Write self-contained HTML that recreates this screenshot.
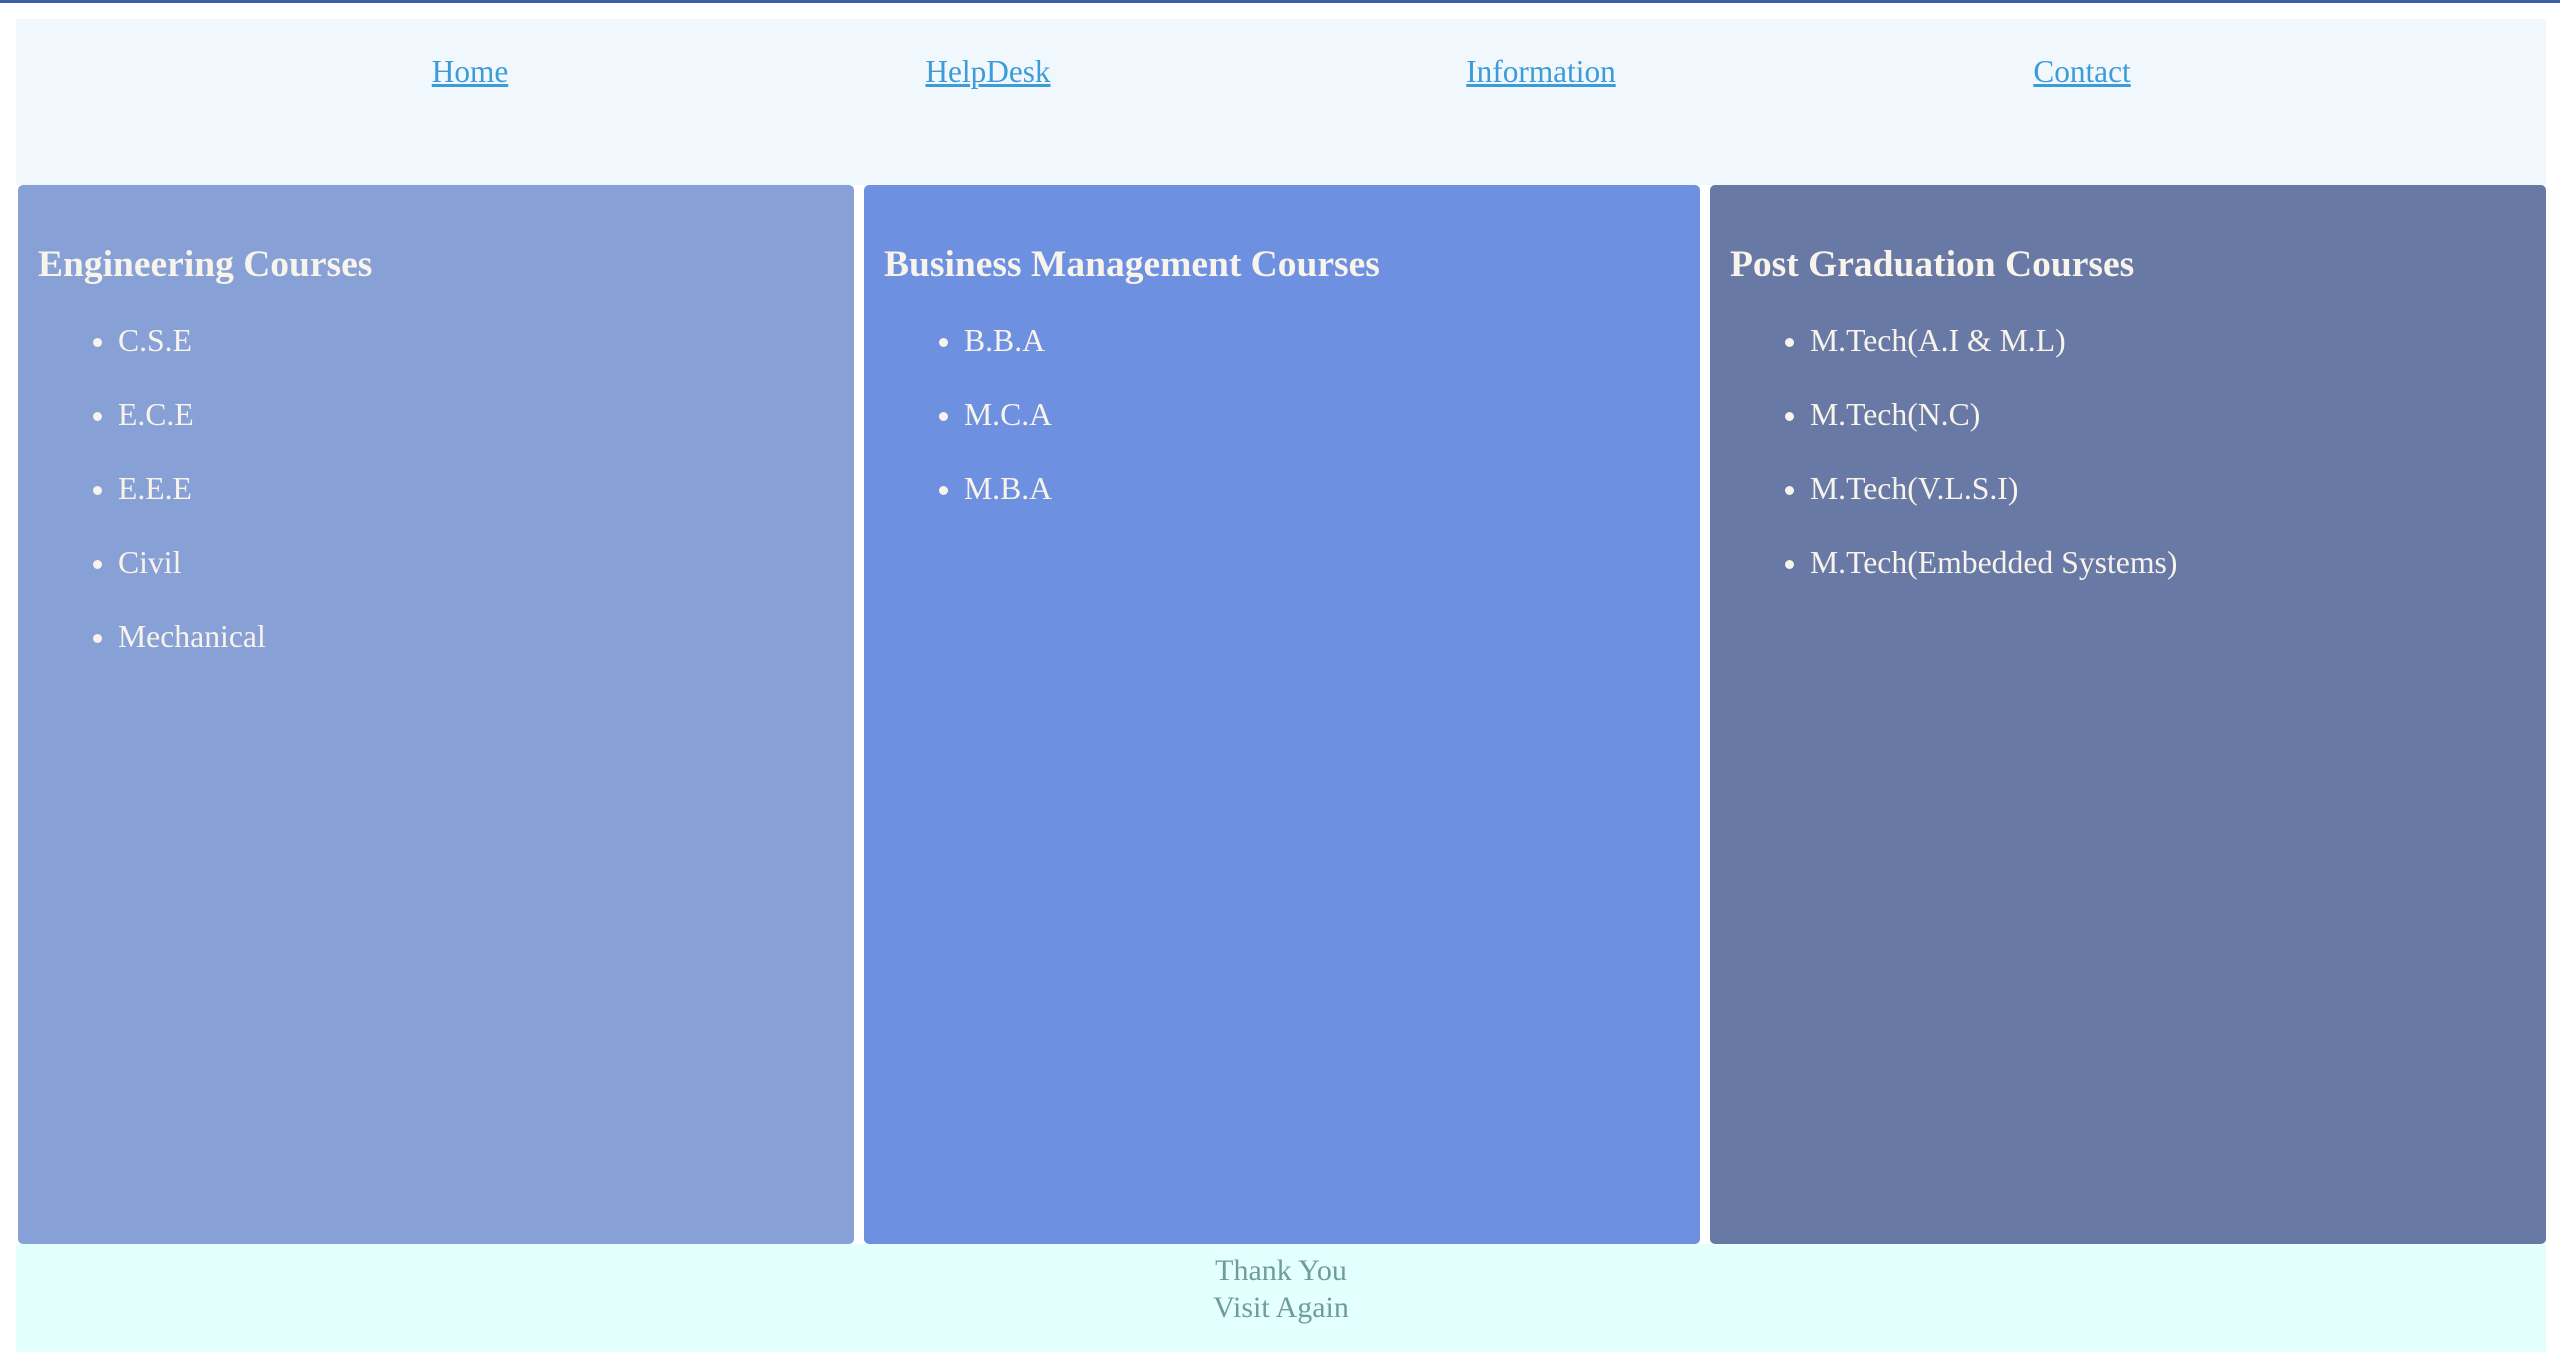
<!DOCTYPE html>
<html><head><meta charset="utf-8"><style>
*{margin:0;padding:0;box-sizing:border-box}
html,body{width:2560px;height:1369px;background:#fff;overflow:hidden;font-family:"Liberation Serif",serif}
.top{position:absolute;left:0;top:0;width:2560px;height:3px;background:#3d62a3}
.nav{position:absolute;left:16px;top:19px;width:2530px;height:166px;background:#f0f7fd}
.nav a{position:absolute;top:36px;font-size:31.3px;line-height:34px;color:#3d9bd6;text-decoration:underline;transform:translateX(-50%)}
.card{position:absolute;top:185px;height:1059px;border-radius:5px;color:#f8f4ec}
.card h2{position:absolute;left:20px;top:58px;font-size:37.5px;line-height:44px;font-weight:bold;white-space:nowrap}
.card ul{position:absolute;left:100px;list-style:disc;font-size:31.7px;line-height:34px;white-space:nowrap}
.card li{height:74px}
.footer{position:absolute;left:16px;top:1244px;width:2530px;height:108px;background:#e3fffe;color:#6f9c9c;text-align:center;font-size:30px;line-height:37px;padding-top:8px}
</style></head><body>
<div class="top"></div>
<div class="nav">
<a style="left:454px">Home</a>
<a style="left:972px">HelpDesk</a>
<a style="left:1525px">Information</a>
<a style="left:2066px">Contact</a>
</div>
<div class="card" style="left:18px;width:836px;background:#87a0d6">
<h2>Engineering Courses</h2>
<ul style="top:139px"><li>C.S.E</li><li>E.C.E</li><li>E.E.E</li><li>Civil</li><li>Mechanical</li></ul>
</div>
<div class="card" style="left:864px;width:836px;background:#6e90e0">
<h2>Business Management Courses</h2>
<ul style="top:139px"><li>B.B.A</li><li>M.C.A</li><li>M.B.A</li></ul>
</div>
<div class="card" style="left:1710px;width:836px;background:#6879a5">
<h2>Post Graduation Courses</h2>
<ul style="top:139px"><li>M.Tech(A.I &amp; M.L)</li><li>M.Tech(N.C)</li><li>M.Tech(V.L.S.I)</li><li>M.Tech(Embedded Systems)</li></ul>
</div>
<div class="footer">Thank You<br>Visit Again</div>
</body></html>
